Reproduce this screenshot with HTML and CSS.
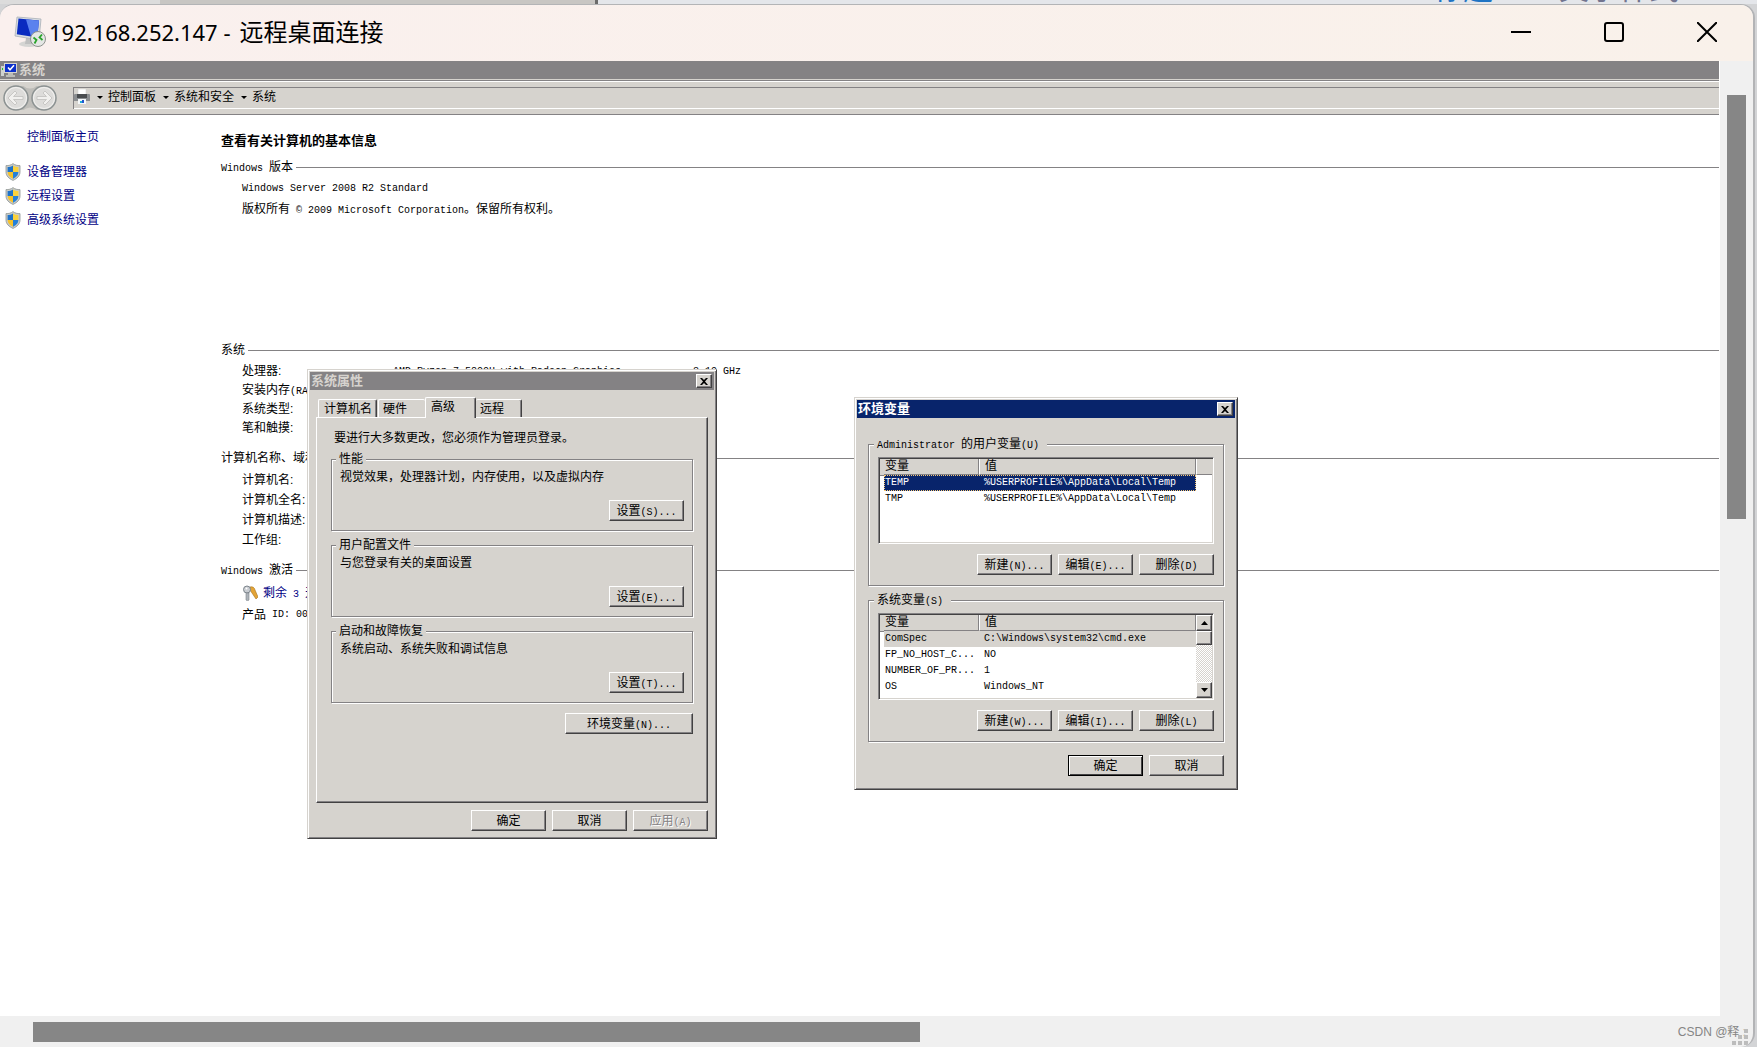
FILE: index.html
```html
<!DOCTYPE html>
<html lang="zh-CN">
<head>
<meta charset="utf-8">
<title>192.168.252.147 - 远程桌面连接</title>
<link rel="stylesheet" href="styles.css">
</head>
<body>
<svg class="defs" aria-hidden="true">
  <symbol id="shield" viewBox="0 0 16 18">
    <path d="M8 .6C6 2.2 3.6 2.700 1 2.600V9c0 4 3 6.600 7 8.400C12 15.600 15 13 15 9V2.600C12.400 2.700 10 2.200 8 .6Z" fill="#c9ccc8" stroke="#8f9694" stroke-width=".8"/>
    <path d="M8 2.400C6.400 3.400 4.500 4 2.600 4v5H8Z" fill="#1f73c9"/>
    <path d="M8 2.400C9.600 3.400 11.500 4 13.400 4v5H8Z" fill="#fbd23c"/>
    <path d="M2.600 9c0 3.200 2.400 5.200 5.400 6.700V9Z" fill="#f5c22b"/>
    <path d="M13.400 9c0 3.200-2.400 5.200-5.400 6.700V9Z" fill="#2580d8"/>
  </symbol>
  <symbol id="x" viewBox="0 0 8 7"><path d="M0 0h2l2 2 2-2h2L5 3.500 8 7H6L4 5 2 7H0l3-3.500Z" fill="#000"/></symbol>
</svg>

<div class="backdrop" aria-hidden="true">
  <span class="pane"></span>
  <span class="heading">标题</span>
  <span class="style">文字样式</span>
</div>

<div class="window">
  <header class="titlebar">
    <svg class="app-icon" viewBox="0 0 32 32">
      <ellipse cx="15" cy="28" rx="10" ry="3" fill="#d5d5d3"/>
      <path d="M12 22h8l2 6h-11Z" fill="#bfc0c0"/>
      <path d="M3 1 27 3 25 24 1 20Z" fill="#d9dde2" stroke="#aab0b8" stroke-width=".8"/>
      <path d="M4.500 2.500 25 4.500 23.300 21.500 2.800 18.200Z" fill="#0a2bc0"/>
      <path d="M12 3.400 25 4.500 23.300 21.500 17 20.500Z" fill="#5b82ee"/>
      <circle cx="24" cy="23" r="7.500" fill="#e5e7e5" stroke="#8d918d"/>
      <path d="m19.500 21.500 3 2.500-2 3.500M28 18.500l-2.500 3 3 2.500" fill="none" stroke="#2ba32b" stroke-width="1.800"/>
    </svg>
    <h1><span class="ip">192.168.252.147 -</span>远程桌面连接</h1>
    <div class="caption">
      <button type="button" aria-label="最小化"><svg viewBox="0 0 20 20"><path d="M0 10h20" stroke="#000" stroke-width="2"/></svg></button>
      <button type="button" aria-label="最大化"><svg viewBox="0 0 20 20"><rect x="1" y="1" width="18" height="18" rx="2" fill="none" stroke="#000" stroke-width="2"/></svg></button>
      <button type="button" aria-label="关闭"><svg viewBox="0 0 20 20"><path d="m0 0 20 20M20 0 0 20" stroke="#000" stroke-width="2"/></svg></button>
    </div>
  </header>

  <div class="viewport">
    <div class="remote">
      <div class="sys-title">
        <svg viewBox="0 0 16 16"><path d="M0 4h3v10H0Z" fill="#cfd2cf"/><path d="M1 6h1v2H1Z" fill="#25c425"/><rect x="3" y="1" width="13" height="10" fill="#d6d3ce"/><rect x="4" y="2" width="11" height="8" fill="#0b2fcb"/><path d="m7 5.500 2 2.300 4-4.600" fill="none" stroke="#fff" stroke-width="1.500"/><path d="M7 11h5v2h2v2H5v-2h2Z" fill="#bdbdb8"/></svg>
        <h2>系统</h2>
      </div>
      <nav class="toolbar">
        <svg class="history" viewBox="0 0 56 26">
          <path d="M14 1h28v24H14Z" fill="#bebdb9"/>
          <path d="M20 0q8 7 16 0ZM20 26q8-7 16 0Z" fill="#d6d3ce"/>
          <g fill="#dddcda" stroke="#8c9292" stroke-width="1.500"><circle cx="14" cy="13" r="12"/><circle cx="42" cy="13" r="12"/></g>
          <g fill="none" stroke="#f3f2f0"><circle cx="14" cy="13" r="10.500"/><circle cx="42" cy="13" r="10.500"/></g>
          <g fill="#f1f0ee" stroke="#c0bfbc" stroke-width=".8"><path d="m6 13 7-7 2 2-3.500 3.500H21v3h-9.500L15 18l-2 2Z"/><path d="m50 13-7-7-2 2 3.500 3.500H35v3h9.500L41 18l2 2Z"/></g>
        </svg>
        <div class="address">
          <svg class="printer" viewBox="0 0 16 16"><path d="M4 0h8v6H4Z" fill="#fff" stroke="#ccc" stroke-width=".5"/><path d="M0 6q0-1 1-1h14q1 0 1 1v6H0Z" fill="#8b8e91"/><path d="M3 5h10v4H3Z" fill="#4a4d50"/><path d="M4 10h8v5H4Z" fill="#f4f8fa"/><path d="M6 12h2v2H6Z" fill="#1dafd6"/><path d="M8 11h2v3H8Z" fill="#2255d0"/></svg>
          <i class="arrow"></i><a href="#">控制面板</a>
          <i class="arrow"></i><a href="#">系统和安全</a>
          <i class="arrow"></i><a href="#">系统</a>
        </div>
      </nav>

      <div class="page">
        <aside>
          <a href="#">控制面板主页</a>
          <ul>
            <li><svg><use href="#shield"/></svg><a href="#">设备管理器</a></li>
            <li><svg><use href="#shield"/></svg><a href="#">远程设置</a></li>
            <li><svg><use href="#shield"/></svg><a href="#">高级系统设置</a></li>
          </ul>
        </aside>
        <main>
          <h2>查看有关计算机的基本信息</h2>
          <section class="edition">
            <h3><span><span class="m">Windows </span>版本</span></h3>
            <p class="m">Windows Server 2008 R2 Standard</p>
            <p>版权所有<span class="m"> © 2009 Microsoft Corporation</span>。保留所有权利。</p>
          </section>
          <section class="system">
            <h3><span>系统</span></h3>
            <dl>
              <dt>处理器:</dt><dd class="m cpu">AMD Ryzen 7 5800H with Radeon Graphics            3.19 GHz</dd>
              <dt>安装内存<span class="m">(RAM)</span>:</dt><dd></dd>
              <dt>系统类型:</dt><dd></dd>
              <dt>笔和触摸:</dt><dd></dd>
            </dl>
          </section>
          <section class="names">
            <h3><span>计算机名称、域和工作组设置</span></h3>
            <p>计算机名:</p>
            <p>计算机全名:</p>
            <p>计算机描述:</p>
            <p>工作组:</p>
          </section>
          <section class="activation">
            <h3><span><span class="m">Windows </span>激活</span></h3>
            <p><svg viewBox="0 0 16 16"><path d="M8 2q4-1 5 3l3 7-2 2-6-9Z" fill="#e3a437" stroke="#a8721b" stroke-width=".6"/><circle cx="5" cy="4.500" r="3.500" fill="#c9cdd2" stroke="#7d858c"/><circle cx="4.500" cy="3.500" r="1" fill="#fff"/><path d="M4 8h3v7l-1.500 1L4 15Z" fill="#aeb4ba" stroke="#7d858c" stroke-width=".6"/></svg><a href="#">剩余<span class="m"> 3 </span>天</a></p>
            <p>产品<span class="m"> ID: 00486</span></p>
          </section>
        </main>
      </div>

      <section class="dialog props" role="dialog" aria-label="系统属性">
        <header><h2>系统属性</h2><button class="close" type="button" aria-label="关闭"><svg><use href="#x"/></svg></button></header>
        <div class="tabs" role="tablist">
          <button type="button" role="tab" class="t-name">计算机名</button>
          <button type="button" role="tab" class="t-hw">硬件</button>
          <button type="button" role="tab" class="active" aria-selected="true">高级</button>
          <button type="button" role="tab" class="t-remote">远程</button>
        </div>
        <div class="panel">
          <p>要进行大多数更改，您必须作为管理员登录。</p>
          <fieldset>
            <legend>性能</legend>
            <p>视觉效果，处理器计划，内存使用，以及虚拟内存</p>
            <div class="actions"><button class="btn" type="button">设置<span class="m">(S)...</span></button></div>
          </fieldset>
          <fieldset>
            <legend>用户配置文件</legend>
            <p>与您登录有关的桌面设置</p>
            <div class="actions"><button class="btn" type="button">设置<span class="m">(E)...</span></button></div>
          </fieldset>
          <fieldset>
            <legend>启动和故障恢复</legend>
            <p>系统启动、系统失败和调试信息</p>
            <div class="actions"><button class="btn" type="button">设置<span class="m">(T)...</span></button></div>
          </fieldset>
          <div class="env-row"><button class="btn wide" type="button">环境变量<span class="m">(N)...</span></button></div>
        </div>
        <footer>
          <button class="btn" type="button">确定</button>
          <button class="btn" type="button">取消</button>
          <button class="btn" type="button" disabled>应用<span class="m">(A)</span></button>
        </footer>
      </section>

      <section class="dialog env" role="dialog" aria-label="环境变量">
        <header><h2>环境变量</h2><button class="close" type="button" aria-label="关闭"><svg><use href="#x"/></svg></button></header>
        <div class="body">
          <fieldset>
            <legend><span class="m">Administrator </span>的用户变量<span class="m">(U)</span></legend>
            <div class="list">
              <table>
                <thead><tr><th>变量</th><th>值</th></tr></thead>
                <tbody class="m">
                  <tr class="selected"><td>TEMP</td><td>%USERPROFILE%\AppData\Local\Temp</td></tr>
                  <tr><td>TMP</td><td>%USERPROFILE%\AppData\Local\Temp</td></tr>
                </tbody>
              </table>
              <div class="head-rest"></div>
            </div>
            <div class="actions">
              <button class="btn" type="button">新建<span class="m">(N)...</span></button>
              <button class="btn" type="button">编辑<span class="m">(E)...</span></button>
              <button class="btn" type="button">删除<span class="m">(D)</span></button>
            </div>
          </fieldset>
          <fieldset>
            <legend>系统变量<span class="m">(S)</span></legend>
            <div class="list">
              <table>
                <thead><tr><th>变量</th><th>值</th></tr></thead>
                <tbody class="m">
                  <tr class="current"><td>ComSpec</td><td>C:\Windows\system32\cmd.exe</td></tr>
                  <tr><td>FP_NO_HOST_C...</td><td>NO</td></tr>
                  <tr><td>NUMBER_OF_PR...</td><td>1</td></tr>
                  <tr><td>OS</td><td>Windows_NT</td></tr>
                </tbody>
              </table>
              <div class="scroll">
                <button type="button" aria-label="向上滚动"><svg viewBox="0 0 7 4"><path d="M0 4 3.500 0 7 4Z"/></svg></button>
                <span class="knob"></span>
                <button type="button" aria-label="向下滚动"><svg viewBox="0 0 7 4"><path d="M0 0 3.500 4 7 0Z"/></svg></button>
              </div>
            </div>
            <div class="actions">
              <button class="btn" type="button">新建<span class="m">(W)...</span></button>
              <button class="btn" type="button">编辑<span class="m">(I)...</span></button>
              <button class="btn" type="button">删除<span class="m">(L)</span></button>
            </div>
          </fieldset>
          <footer>
            <button class="btn default" type="button">确定</button>
            <button class="btn" type="button">取消</button>
          </footer>
        </div>
      </section>
    </div>
    <div class="vscroll"><div class="thumb"></div></div>
    <div class="hscroll"><div class="thumb"></div></div>
    <div class="corner">
      <span>CSDN @释 ;</span>
      <svg viewBox="0 0 16 16"><path d="M12 0h4v4h-4zM6 6h4v4H6zM12 6h4v4h-4zM0 12h4v4H0zM6 12h4v4H6zM12 12h4v4h-4z" fill="#bcbcbc"/></svg>
    </div>
  </div>
</div>
</body>
</html>
```
FILE: styles.css
```css
:root {
  --face: #d6d3ce;
  --shade: #848284;
  --dark: #424142;
  --navy: #08246b;
  --link: #000084;
}
* { box-sizing: border-box; }
body {
  margin: 0;
  min-height: 100vh;
  display: flex;
  flex-direction: column;
  background: #d3d4d6;
  color: #000;
  font: 12px/16px "Liberation Sans", "Noto Sans CJK SC", sans-serif;
}
h1, h2, h3, p, ul, dl, dd { margin: 0; padding: 0; font-weight: normal; }
ul { list-style: none; }
a { color: inherit; text-decoration: none; }
button { font: inherit; color: inherit; padding: 0; border: 0; background: none; }
svg { display: block; flex: none; }
.defs { position: absolute; width: 0; height: 0; }
.m { font-family: "Liberation Mono", monospace; font-size: 10px; white-space: pre; }
span.m { line-height: 10px; }

/* Slice of the editor that shows behind the window */
.backdrop {
  height: 4px;
  display: flex;
  align-items: flex-end;
  overflow: hidden;
  background: linear-gradient(90deg, #dcdcdc 0 160px, #c8c6c3 160px 598px, #e4e6ea 598px);
  font-size: 30px;
  line-height: 30px;
}
.backdrop .pane { width: 598px; height: 4px; border-right: 3px solid #6b6b6b; }
.backdrop .heading { margin-left: 835px; color: #1f74c4; }
.backdrop .style { margin-left: 66px; color: #72748f; }

.window {
  flex: 1;
  display: flex;
  flex-direction: column;
  margin-right: 2px;
  border: 2px solid #b3b4b6;
  border-width: 1px 2px 0 0;
  border-radius: 14px 14px 14px 0;
  overflow: hidden;
  background: #f0f0f0;
}
.titlebar {
  height: 56px;
  display: flex;
  align-items: center;
  padding: 0 0 2px 14px;
  background: linear-gradient(90deg, #faf0ee, #f9f1ea);
}
.app-icon { width: 32px; height: 32px; }
.titlebar h1 { flex: 1; margin-left: 3px; font-size: 24px; line-height: 32px; }
.ip { margin-right: 9px; font: 22px/32px "Noto Sans", sans-serif; white-space: pre; }
.caption { display: flex; }
.caption button { width: 93px; height: 54px; display: grid; place-items: center; }
.caption svg { width: 20px; height: 20px; }

.viewport {
  flex: 1;
  display: grid;
  grid-template-columns: 1fr 33px;
  grid-template-rows: 1fr 31px;
}
.remote {
  position: relative;
  border-right: 1px solid #fff;
  background: #fff;
  min-width: 0;
}
.vscroll { padding: 34px 7px 0 7px; }
.vscroll .thumb { width: 19px; height: 46%; background: #868686; }
.hscroll { padding: 6px 0 0 33px; }
.hscroll .thumb { width: 52.6%; height: 20px; background: #868686; }
.corner { display: flex; justify-content: flex-end; align-items: flex-end; padding: 0 5px 2px 0; color: #858585; }
.corner span { flex: none; white-space: nowrap; line-height: 26px; margin-right: -14px; }
.corner svg { width: 16px; height: 16px; }

.sys-title { height: 18px; display: flex; align-items: center; gap: 2px; padding-left: 1px; background: var(--shade); color: var(--face); }
.sys-title svg { width: 16px; height: 16px; }
.sys-title h2 { font-size: 13px; font-weight: bold; }
.toolbar {
  height: 36px;
  display: flex;
  align-items: center;
  padding: 2px 0 0 2px;
  border-bottom: 1px solid var(--shade);
  background: linear-gradient(var(--face) 0 1px, var(--shade) 1px 2px, #fff 2px 3px, var(--face) 3px);
}
.history { width: 56px; height: 26px; }
.address {
  flex: 1;
  height: 22px;
  display: flex;
  align-items: center;
  margin-left: 15px;
  padding-bottom: 2px;
  border: 1px solid var(--shade);
  border-width: 1px 0 0 1px;
  box-shadow: inset 0 -1px #fff;
}
.printer { width: 16px; height: 16px; }
.arrow { margin: 0 5px 0 7px; border: 3px solid transparent; border-top-color: #000; border-bottom-width: 0; }

.page { display: grid; grid-template-columns: 221px 1fr; }
aside { padding: 12px 0 0 27px; line-height: 20px; color: var(--link); }
aside ul { margin: 13px 0 0 -22px; }
aside li { display: flex; align-items: center; gap: 6px; height: 24px; }
aside li svg { width: 16px; height: 18px; }
main { padding-top: 16px; line-height: 20px; min-width: 0; }
main h2 { font-size: 13px; font-weight: bold; }
main h3 { display: flex; align-items: center; gap: 3px; height: 20px; font-size: 12px; margin-bottom: 2px; }
main h3::after { content: ""; flex: 1; height: 1px; background: var(--shade); }
main p, main dl { padding-left: 21px; }
main p { height: 20px; }
.edition { margin-top: 6px; }
.system { margin-top: 121px; }
.system dl { display: grid; grid-template-columns: 151px 1fr; line-height: 19px; }
.names, .activation { margin-top: 10px; }
.activation p { display: flex; align-items: center; height: 22px; }
.activation p svg { width: 16px; height: 16px; margin-right: 5px; }
.activation a { color: var(--link); }

/* Dialogs float over the remote desktop */
.dialog {
  position: absolute;
  padding: 2px;
  border: 1px solid;
  border-color: var(--face) var(--dark) var(--dark) var(--face);
  box-shadow: inset 1px 1px #fff, inset -1px -1px var(--shade);
  background: var(--face);
}
.dialog header { height: 18px; display: flex; align-items: center; padding: 0 2px 0 1px; background: var(--shade); color: var(--face); }
.dialog header h2 { flex: 1; font-size: 13px; font-weight: bold; }
.close, .btn, .scroll button, .knob {
  border: 1px solid;
  border-color: #fff var(--dark) var(--dark) #fff;
  box-shadow: inset -1px -1px var(--shade);
  background: var(--face);
}
.close { width: 16px; height: 14px; display: grid; place-items: center; }
.close svg { width: 8px; height: 7px; }
.btn { width: 75px; height: 21px; line-height: 16px; }
.btn.wide { width: 128px; }
.btn.default { border-color: #000; box-shadow: inset 1px 1px #fff, inset -1px -1px var(--dark); }
.btn:disabled { color: var(--shade); text-shadow: 1px 1px #fff; }
.actions, .env-row, .dialog footer { display: flex; justify-content: flex-end; gap: 6px; }

fieldset {
  min-width: 0;
  margin: 0;
  padding: 2px 8px 9px 8px;
  border: 1px solid var(--shade);
  box-shadow: 1px 1px #fff, inset 1px 1px #fff;
}
legend { height: 16px; margin-left: -4px; padding: 0 3px; background: var(--face); }

.props { left: 307px; top: 308px; width: 410px; }
.tabs { display: flex; align-items: flex-end; padding: 7px 0 0 8px; }
.tabs button {
  height: 18px;
  border: solid #fff;
  border-width: 1px 0 0 1px;
  border-radius: 2px 2px 0 0;
  text-align: left;
  padding-left: 5px;
}
.tabs .t-name { width: 59px; border-right: 1px solid var(--dark); box-shadow: inset -1px 0 var(--shade); }
.tabs .t-hw { width: 47px; padding-left: 4px; margin-left: 1px; }
.tabs .active { width: 51px; height: 21px; padding-bottom: 2px; margin-bottom: -1px; border-right: 1px solid var(--dark); box-shadow: inset -1px 0 var(--shade); background: var(--face); }
.tabs .t-remote { width: 46px; padding-left: 4px; border-left: 0; border-right: 1px solid var(--dark); box-shadow: inset -1px 0 var(--shade); }
.panel {
  min-height: 386px;
  margin: 0 6px;
  padding: 12px 14px;
  border: 1px solid;
  border-color: #fff var(--dark) var(--dark) #fff;
  box-shadow: inset -1px -1px var(--shade);
}
.panel > p { padding-left: 3px; margin-bottom: 5px; }
.panel fieldset + fieldset { margin-top: 6px; }
.panel .actions { margin-top: 15px; }
.env-row { margin-top: 10px; }
.props footer { padding: 7px 6px 5px; }

.env { left: 854px; top: 336px; width: 384px; }
.env header { background: var(--navy); color: #fff; }
.body { padding: 18px 11px 11px; }
.env fieldset { padding: 5px 9px 10px; }
.env fieldset + fieldset { margin-top: 6px; }
.env .actions { margin-top: 10px; }
.env footer { margin-top: 13px; }
.env legend { padding-right: 8px; }
.list {
  height: 87px;
  display: flex;
  align-items: flex-start;
  border: 1px solid;
  border-color: var(--shade) #fff #fff var(--shade);
  box-shadow: inset 1px 1px var(--dark), inset -1px -1px var(--face);
  padding: 1px 1px 1px 5px;
  background: #fff;
}
table { width: 312px; border-spacing: 0; table-layout: fixed; }
th, td { height: 16px; padding: 0 0 0 1px; line-height: 16px; text-align: left; white-space: nowrap; }
th { padding-left: 1px; line-height: 15px; font-weight: normal; background: var(--face); border: solid var(--shade); border-width: 0 1px 1px 0; }
th:first-child { width: 95px; box-shadow: -4px 0 var(--face), -4px 1px var(--shade); }
th + th, td + td { padding-left: 5px; }
th + th { border-left: 1px solid #fff; }
.selected { background: var(--navy); color: #fff; outline: 1px dotted #f7c873; outline-offset: -1px; }
.current { background: var(--face); }
.head-rest { flex: 1; height: 16px; background: var(--face); border-bottom: 1px solid var(--shade); border-left: 1px solid #fff; }
.scroll {
  flex: 1;
  height: 83px;
  display: flex;
  flex-direction: column;
  background: repeating-conic-gradient(#fff 0 25%, var(--face) 0 50%) 0 0 / 2px 2px;
}
.scroll button { height: 16px; display: grid; place-items: center; }
.scroll svg { width: 7px; height: 4px; }
.knob { height: 14px; margin-bottom: auto; }
```
